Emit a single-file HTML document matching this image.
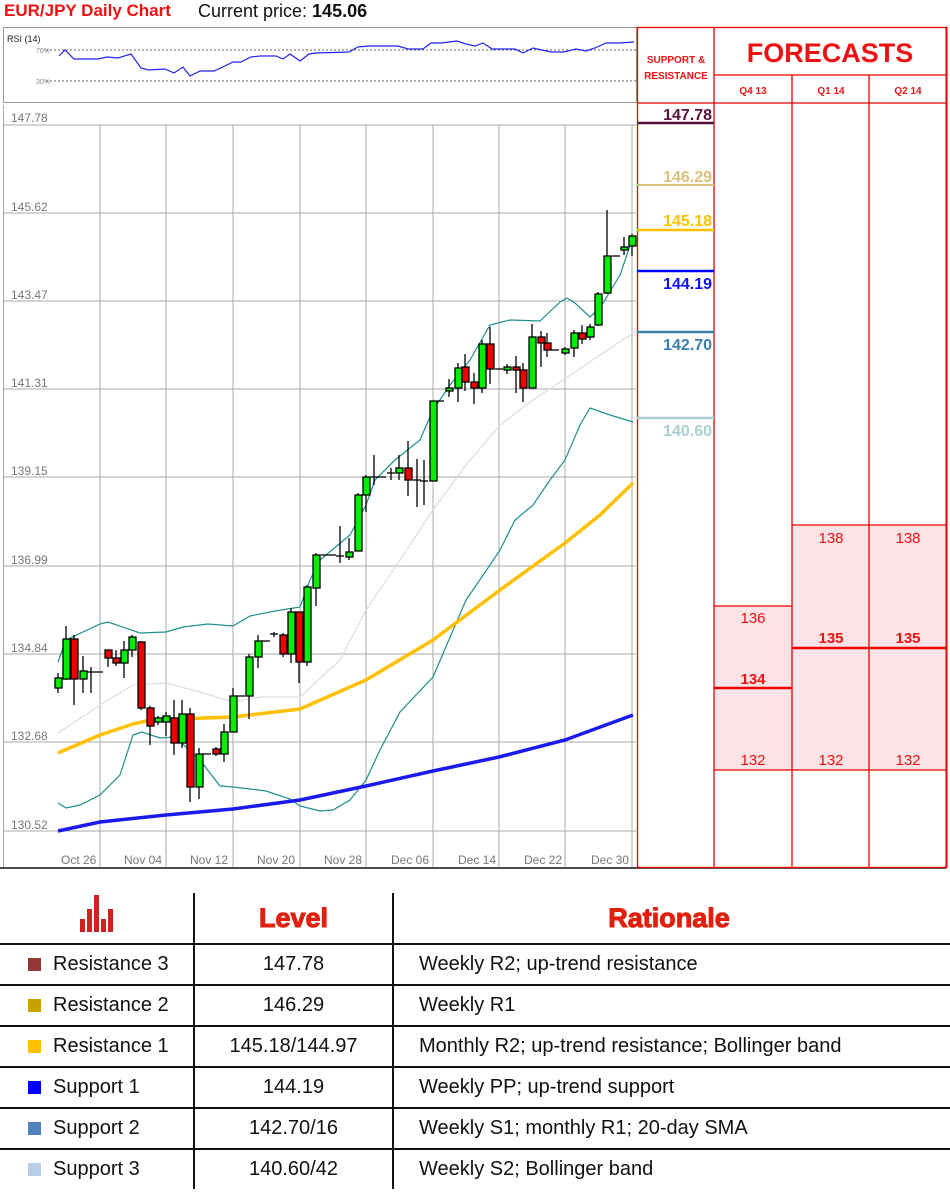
<!DOCTYPE html>
<html><head><meta charset="utf-8"><style>
body{margin:0;width:950px;height:1192px;background:#fff;position:relative;overflow:hidden;font-family:"Liberation Sans",sans-serif}
.a{position:absolute}
.t{position:absolute;left:0;top:893px;width:950px;border-collapse:collapse}
.t td{border-top:2px solid #111;height:39px;font-size:20px;color:#111;padding:0}
.t td.c1{width:193px;border-right:2px solid #111}
.t td.c2{width:197px;border-right:2px solid #111;text-align:center}
.t td.c3{padding-left:25px}
.t tr.h td{border-top:none;height:46px}
.sq{display:inline-block;width:13px;height:13px;margin:0 12px 0 28px;vertical-align:-1px}
.hd{font-family:"Liberation Sans",sans-serif;font-weight:900;color:#e0200a;font-size:27px;-webkit-text-stroke:1px #e0200a}
</style></head><body>
<div class="a" style="left:4px;top:1px;font-size:17px;font-weight:bold;color:#ee1111">EUR/JPY Daily Chart</div>
<div class="a" style="left:198px;top:1px;font-size:18px;color:#111">Current price: <b>145.06</b></div>

<svg class="a" style="left:0;top:0" width="950" height="880" xmlns="http://www.w3.org/2000/svg">
<rect x="3.5" y="27.5" width="633" height="75" fill="#fff" stroke="#999"/>
<text x="7" y="42" font-size="9" fill="#222" font-family="Liberation Sans">RSI (14)</text>
<text x="36" y="53" font-size="7" fill="#888" font-family="Liberation Sans">70%</text>
<text x="36" y="84" font-size="7" fill="#888" font-family="Liberation Sans">30%</text>
<line x1="46" y1="50" x2="636" y2="50" stroke="#666" stroke-dasharray="2,2"/>
<line x1="46" y1="81" x2="636" y2="81" stroke="#666" stroke-dasharray="2,2"/>
<polyline fill="none" stroke="#2222ee" stroke-width="1.2" points="59,56 65,50 74,59 98,59 107,57 118,58 131,54 141,68 149,70 165,69 174,73 183,67 190,76 200,71 214,71 223,67 233,62 241,62 251,57 260,56 276,56 283,59 290,54 300,61 309,54 316,53 349,52 358,47 368,46 398,46 408,49 423,49 431,43 441,43 457,41 466,44 475,46 483,43 492,49 515,49 523,53 533,48 551,52 564,52 576,49 586,51 595,48 606,43 619,43 634,42"/>
<line x1="3.5" y1="105" x2="3.5" y2="868" stroke="#aaa"/>
<g stroke="#aaa" stroke-width="1">
<line x1="3" y1="125" x2="636" y2="125"/><line x1="3" y1="213" x2="636" y2="213"/><line x1="3" y1="301" x2="636" y2="301"/><line x1="3" y1="389" x2="636" y2="389"/><line x1="3" y1="477" x2="636" y2="477"/><line x1="3" y1="566" x2="636" y2="566"/><line x1="3" y1="654" x2="636" y2="654"/><line x1="3" y1="742" x2="636" y2="742"/><line x1="3" y1="831" x2="636" y2="831"/>
<line x1="100" y1="125" x2="100" y2="867"/><line x1="166" y1="125" x2="166" y2="867"/><line x1="233" y1="125" x2="233" y2="867"/><line x1="300" y1="125" x2="300" y2="867"/><line x1="366" y1="125" x2="366" y2="867"/><line x1="433" y1="125" x2="433" y2="867"/><line x1="499" y1="125" x2="499" y2="867"/><line x1="565" y1="125" x2="565" y2="867"/><line x1="632" y1="125" x2="632" y2="867"/>
</g>
<g font-family="Liberation Sans" font-size="12" fill="#777">
<text x="11" y="122">147.78</text><text x="11" y="211">145.62</text><text x="11" y="299">143.47</text><text x="11" y="387">141.31</text><text x="11" y="475">139.15</text><text x="11" y="564">136.99</text><text x="11" y="652">134.84</text><text x="11" y="740">132.68</text><text x="11" y="829">130.52</text>
<text x="61" y="864">Oct 26</text><text x="124" y="864">Nov 04</text><text x="190" y="864">Nov 12</text><text x="257" y="864">Nov 20</text><text x="324" y="864">Nov 28</text><text x="391" y="864">Dec 06</text><text x="458" y="864">Dec 14</text><text x="524" y="864">Dec 22</text><text x="591" y="864">Dec 30</text>
</g>
<line x1="0" y1="868" x2="946" y2="868" stroke="#111" stroke-width="1.5"/>
<polyline fill="none" stroke="#ddd" stroke-width="1.2" points="58,733 100,705 133,685 166,683 200,692 233,702 260,697 300,697 340,660 366,610 400,560 433,510 466,465 500,425 533,400 566,378 600,355 633,333"/>
<polyline fill="none" stroke="#1f8f8f" stroke-width="1.2" points="58,662 66,640 100,624 108,622 140,633 166,632 183,627 208,624 233,626 250,616 275,611 300,607 310,580 320,560 350,535 366,505 375,480 395,460 420,440 433,410 450,385 470,360 490,325 510,320 540,321 560,302 567,298 575,303 590,317 600,308 620,275 633,237"/>
<polyline fill="none" stroke="#1f8f8f" stroke-width="1.2" points="58,803 66,808 80,805 100,795 120,775 133,735 142,732 160,738 175,737 200,760 220,786 233,787 266,791 290,799 300,806 320,811 333,810 350,800 366,780 380,750 400,712 433,677 466,600 490,565 500,550 515,520 533,505 550,480 565,460 580,425 590,408 610,415 633,422"/>
<polyline fill="none" stroke="#ffc000" stroke-width="3.5" points="58,753 100,735 133,724 150,720 233,717 300,709 366,680 433,640 500,590 565,543 600,515 633,483"/>
<polyline fill="none" stroke="#1a1aee" stroke-width="3.5" points="58,831 100,822 166,815 233,809 300,800 366,786 433,771 499,757 565,740 633,715"/>
<g stroke="#000" stroke-width="1.3">
<line x1="58" y1="673" x2="58" y2="693"/><rect x="55" y="678" width="7" height="10" fill="#0e0"/>
<line x1="66" y1="626" x2="66" y2="680"/><rect x="63" y="639" width="7" height="40" fill="#0e0"/>
<line x1="74" y1="635" x2="74" y2="705"/><rect x="71" y="639" width="7" height="40" fill="#e00"/>
<line x1="83" y1="656" x2="83" y2="693"/><rect x="80" y="671" width="7" height="8" fill="#0e0"/>
<line x1="91" y1="667" x2="91" y2="693"/><line x1="87" y1="672" x2="95" y2="672"/>
<line x1="95" y1="672" x2="103" y2="672"/>
<line x1="108" y1="650" x2="108" y2="667"/><rect x="105" y="650" width="7" height="8" fill="#e00"/>
<line x1="116" y1="650" x2="116" y2="666"/><rect x="113" y="658" width="7" height="5" fill="#e00"/>
<line x1="124" y1="641" x2="124" y2="678"/><rect x="121" y="650" width="7" height="13" fill="#0e0"/>
<line x1="132" y1="635" x2="132" y2="657"/><rect x="129" y="637" width="7" height="13" fill="#0e0"/>
<line x1="141" y1="641" x2="141" y2="710"/><rect x="138" y="642" width="7" height="66" fill="#e00"/>
<line x1="150" y1="706" x2="150" y2="745"/><rect x="147" y="708" width="7" height="18" fill="#e00"/>
<line x1="158" y1="716" x2="158" y2="725"/><rect x="155" y="718" width="7" height="4" fill="#0e0"/>
<line x1="166" y1="712" x2="166" y2="736"/><rect x="163" y="716" width="7" height="6" fill="#0e0"/>
<line x1="174" y1="700" x2="174" y2="755"/><rect x="171" y="718" width="7" height="25" fill="#e00"/>
<line x1="182" y1="700" x2="182" y2="748"/><rect x="179" y="714" width="7" height="29" fill="#0e0"/>
<line x1="190" y1="708" x2="190" y2="802"/><rect x="187" y="714" width="7" height="73" fill="#e00"/>
<line x1="199" y1="748" x2="199" y2="799"/><rect x="196" y="754" width="7" height="33" fill="#0e0"/>
<line x1="203" y1="754" x2="211" y2="754"/>
<line x1="216" y1="747" x2="216" y2="756"/><rect x="213" y="749" width="7" height="5" fill="#e00"/>
<line x1="224" y1="724" x2="224" y2="762"/><rect x="221" y="732" width="7" height="22" fill="#0e0"/>
<line x1="233" y1="688" x2="233" y2="732"/><rect x="230" y="696" width="7" height="36" fill="#0e0"/>
<line x1="237" y1="696" x2="245" y2="696"/>
<line x1="249" y1="654" x2="249" y2="719"/><rect x="246" y="657" width="7" height="39" fill="#0e0"/>
<line x1="258" y1="635" x2="258" y2="668"/><rect x="255" y="641" width="7" height="16" fill="#0e0"/>
<line x1="262" y1="641" x2="270" y2="641"/>
<line x1="274" y1="632" x2="274" y2="637"/><line x1="270" y1="634" x2="278" y2="634"/>
<line x1="283" y1="633" x2="283" y2="657"/><rect x="280" y="635" width="7" height="19" fill="#e00"/>
<line x1="291" y1="608" x2="291" y2="663"/><rect x="288" y="612" width="7" height="42" fill="#0e0"/>
<line x1="299" y1="612" x2="299" y2="683"/><rect x="296" y="612" width="7" height="50" fill="#e00"/>
<line x1="307" y1="585" x2="307" y2="666"/><rect x="304" y="587" width="7" height="75" fill="#0e0"/>
<line x1="316" y1="553" x2="316" y2="606"/><rect x="313" y="555" width="7" height="33" fill="#0e0"/>
<line x1="321" y1="555" x2="336" y2="555"/>
<line x1="340" y1="526" x2="340" y2="563"/><line x1="336" y1="556" x2="344" y2="556"/>
<line x1="349" y1="538" x2="349" y2="560"/><rect x="346" y="552" width="7" height="5" fill="#0e0"/>
<line x1="358" y1="493" x2="358" y2="551"/><rect x="355" y="495" width="7" height="56" fill="#0e0"/>
<line x1="366" y1="475" x2="366" y2="512"/><rect x="363" y="477" width="7" height="18" fill="#0e0"/>
<line x1="374" y1="455" x2="374" y2="485"/><line x1="370" y1="477" x2="386" y2="477"/>
<line x1="391" y1="468" x2="391" y2="480"/><line x1="387" y1="473" x2="395" y2="473"/>
<line x1="399" y1="455" x2="399" y2="480"/><rect x="396" y="468" width="7" height="5" fill="#0e0"/>
<line x1="408" y1="441" x2="408" y2="496"/><rect x="405" y="468" width="7" height="12" fill="#e00"/>
<line x1="417" y1="459" x2="417" y2="507"/><line x1="413" y1="480" x2="421" y2="480"/>
<line x1="424" y1="460" x2="424" y2="505"/><line x1="420" y1="481" x2="428" y2="481"/>
<rect x="430" y="401" width="7" height="80" fill="#0e0"/>
<line x1="437" y1="401" x2="444" y2="401"/>
<line x1="449" y1="379" x2="449" y2="397"/><rect x="446" y="388" width="7" height="3" fill="#0e0"/>
<line x1="458" y1="363" x2="458" y2="402"/><rect x="455" y="368" width="7" height="20" fill="#0e0"/>
<line x1="465" y1="354" x2="465" y2="391"/><rect x="462" y="367" width="7" height="15" fill="#e00"/>
<line x1="474" y1="373" x2="474" y2="404"/><rect x="471" y="382" width="7" height="6" fill="#e00"/>
<line x1="482" y1="340" x2="482" y2="393"/><rect x="479" y="344" width="7" height="44" fill="#0e0"/>
<line x1="490" y1="327" x2="490" y2="384"/><rect x="487" y="344" width="7" height="25" fill="#e00"/>
<line x1="495" y1="369" x2="503" y2="369"/>
<line x1="507" y1="364" x2="507" y2="374"/><rect x="504" y="367" width="7" height="3" fill="#0e0"/>
<line x1="516" y1="356" x2="516" y2="393"/><rect x="513" y="367" width="7" height="3" fill="#e00"/>
<line x1="523" y1="363" x2="523" y2="402"/><rect x="520" y="370" width="7" height="18" fill="#e00"/>
<line x1="532" y1="324" x2="532" y2="388"/><rect x="529" y="337" width="7" height="51" fill="#0e0"/>
<line x1="541" y1="331" x2="541" y2="367"/><rect x="538" y="337" width="7" height="6" fill="#e00"/>
<line x1="547" y1="333" x2="547" y2="357"/><rect x="544" y="343" width="7" height="7" fill="#e00"/>
<line x1="551" y1="350" x2="559" y2="350"/>
<line x1="565" y1="347" x2="565" y2="355"/><rect x="562" y="349" width="7" height="4" fill="#0e0"/>
<line x1="574" y1="330" x2="574" y2="357"/><rect x="571" y="333" width="7" height="15" fill="#0e0"/>
<line x1="582" y1="325" x2="582" y2="344"/><rect x="579" y="333" width="7" height="6" fill="#e00"/>
<line x1="590" y1="324" x2="590" y2="340"/><rect x="587" y="327" width="7" height="10" fill="#0e0"/>
<line x1="598" y1="292" x2="598" y2="326"/><rect x="595" y="294" width="7" height="31" fill="#0e0"/>
<line x1="607" y1="210" x2="607" y2="294"/><rect x="604" y="256" width="7" height="37" fill="#0e0"/>
<line x1="612" y1="256" x2="620" y2="256"/>
<line x1="624" y1="237" x2="624" y2="255"/><rect x="621" y="247" width="7" height="3" fill="#0e0"/>
<line x1="632" y1="234" x2="632" y2="256"/><rect x="629" y="236" width="7" height="10" fill="#0e0"/>
</g>
<rect x="792" y="525" width="154" height="245" fill="#fde3e5"/>
<rect x="714" y="606" width="78" height="164" fill="#fde3e5"/>
<g stroke="#ee0000" stroke-width="1.3" fill="none">
<rect x="637.5" y="27.5" width="309" height="840"/>
<line x1="714" y1="27" x2="714" y2="868"/>
<line x1="792" y1="75" x2="792" y2="868"/>
<line x1="869" y1="75" x2="869" y2="868"/>
<line x1="714" y1="75" x2="946" y2="75"/>
<line x1="637" y1="103" x2="946" y2="103"/>
<line x1="792" y1="525" x2="946" y2="525"/>
<line x1="714" y1="606" x2="792" y2="606"/>
<line x1="714" y1="770" x2="946" y2="770"/>
</g>
<line x1="946.5" y1="27" x2="946.5" y2="868" stroke="#ee0000" stroke-width="2"/>
<line x1="714" y1="688" x2="792" y2="688" stroke="#ee0000" stroke-width="2.5"/>
<line x1="792" y1="648" x2="946" y2="648" stroke="#ee0000" stroke-width="2.5"/>
<g font-family="Liberation Sans" fill="#ee1111" text-anchor="middle">
<text x="676" y="63" font-size="10" font-weight="bold">SUPPORT &amp;</text>
<text x="676" y="79" font-size="10" font-weight="bold">RESISTANCE</text>
<text x="830" y="62" font-size="27" font-weight="bold">FORECASTS</text>
<text x="753" y="94" font-size="10" font-weight="bold">Q4 13</text>
<text x="831" y="94" font-size="10" font-weight="bold">Q1 14</text>
<text x="908" y="94" font-size="10" font-weight="bold">Q2 14</text>
<text x="753" y="623" font-size="15">136</text>
<text x="753" y="684" font-size="15" font-weight="bold">134</text>
<text x="753" y="765" font-size="15">132</text>
<text x="831" y="543" font-size="15">138</text>
<text x="831" y="643" font-size="15" font-weight="bold">135</text>
<text x="831" y="765" font-size="15">132</text>
<text x="908" y="543" font-size="15">138</text>
<text x="908" y="643" font-size="15" font-weight="bold">135</text>
<text x="908" y="765" font-size="15">132</text>
</g>
<line x1="637" y1="123" x2="714" y2="123" stroke="#5a1040" stroke-width="2.5"/>
<line x1="637" y1="185" x2="714" y2="185" stroke="#dcc07a" stroke-width="2"/>
<line x1="637" y1="230" x2="714" y2="230" stroke="#ffc000" stroke-width="2.5"/>
<line x1="637" y1="271" x2="714" y2="271" stroke="#0000ff" stroke-width="2.5"/>
<line x1="637" y1="332" x2="714" y2="332" stroke="#3a7fb0" stroke-width="2.5"/>
<line x1="637" y1="418" x2="714" y2="418" stroke="#a8d0d0" stroke-width="2.5"/>
<g font-family="Liberation Sans" font-size="16" font-weight="bold" text-anchor="end">
<text x="712" y="120" fill="#5a1040">147.78</text>
<text x="712" y="182" fill="#dcc07a">146.29</text>
<text x="712" y="226" fill="#ffc000">145.18</text>
<text x="712" y="289" fill="#1010ee">144.19</text>
<text x="712" y="350" fill="#3a7fb0">142.70</text>
<text x="712" y="436" fill="#a8d0d0">140.60</text>
</g>
</svg>

<table class="t">
<tr class="h"><td class="c1" style="text-align:center;vertical-align:bottom;padding-bottom:4px">
<svg width="40" height="38" viewBox="0 0 40 38"><g fill="#d42020"><rect x="3" y="24" width="5" height="13"/><rect x="10" y="14" width="5" height="23"/><rect x="17" y="0" width="5" height="37"/><rect x="24" y="24" width="5" height="13"/><rect x="31" y="14" width="5" height="23"/></g></svg></td>
<td class="c2"><span class="hd">Level</span></td><td class="c3" style="text-align:center;padding-left:0;padding-right:6px"><span class="hd">Rationale</span></td></tr>
<tr><td class="c1"><span class="sq" style="background:#953735"></span>Resistance 3</td><td class="c2">147.78</td><td class="c3">Weekly R2; up-trend resistance</td></tr>
<tr><td class="c1"><span class="sq" style="background:#c9a000"></span>Resistance 2</td><td class="c2">146.29</td><td class="c3">Weekly R1</td></tr>
<tr><td class="c1"><span class="sq" style="background:#ffc000"></span>Resistance 1</td><td class="c2">145.18/144.97</td><td class="c3">Monthly R2; up-trend resistance; Bollinger band</td></tr>
<tr><td class="c1"><span class="sq" style="background:#0000ff"></span>Support 1</td><td class="c2">144.19</td><td class="c3">Weekly PP; up-trend support</td></tr>
<tr><td class="c1"><span class="sq" style="background:#4f81bd"></span>Support 2</td><td class="c2">142.70/16</td><td class="c3">Weekly S1; monthly R1; 20-day SMA</td></tr>
<tr><td class="c1"><span class="sq" style="background:#b9cde5"></span>Support 3</td><td class="c2">140.60/42</td><td class="c3">Weekly S2; Bollinger band</td></tr>
</table>
</body></html>
